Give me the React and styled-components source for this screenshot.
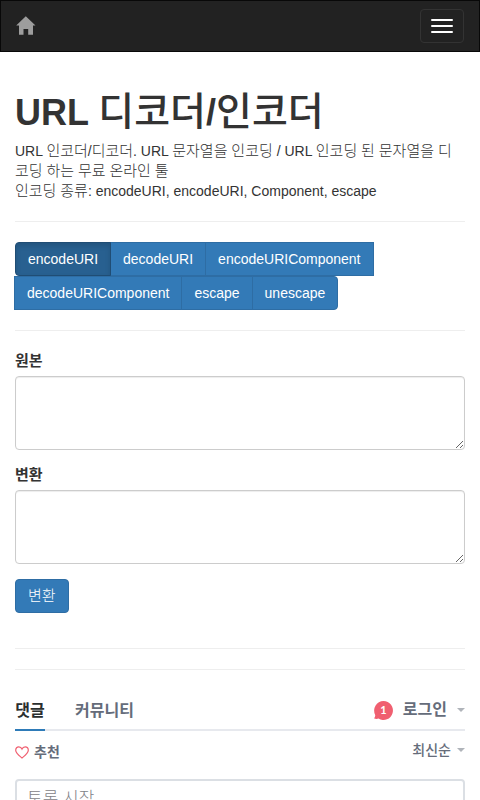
import React, { useState } from "react";
import styled, { createGlobalStyle } from "styled-components";

const GlobalStyle = createGlobalStyle`
  *, *::before, *::after { box-sizing: border-box; }
  body {
    margin: 0;
    background: #fff;
    color: #333;
    font-family: "Liberation Sans", "Noto Sans CJK KR", sans-serif;
    font-size: 14px;
    line-height: 20px;
  }
  button, textarea, input, select { font-family: inherit; }
`;

const Navbar = styled.nav`
  display: flex;
  align-items: center;
  justify-content: space-between;
  height: 52px;
  padding: 0 15px;
  background: #222;
  border: 1px solid #080808;
`;

const HomeLink = styled.a`
  display: flex;
  color: #9d9d9d;
`;

const Toggle = styled.button`
  display: flex;
  flex-direction: column;
  gap: 4px;
  padding: 9px 10px;
  height: 34px;
  justify-content: center;
  background: transparent;
  border: 1px solid #333;
  border-radius: 4px;
`;

const ToggleBar = styled.span`
  width: 22px;
  height: 2px;
  border-radius: 1px;
  background: #fff;
`;

const Page = styled.main`
  padding: 40px 15px 0;
`;

const Title = styled.h1`
  margin: 0 0 9px;
  font-size: 36px;
  line-height: 39px;
  font-weight: 700;
`;

const Hangul = styled.span`
  font-size: ${(p) => (p.$large ? 39 : 15)}px;
  font-weight: ${(p) => (p.$large ? 500 : 300)};
  line-height: 1;
`;

const Slash = styled.span`
  font-weight: 700;
`;

const Intro = styled.p`
  margin: 0;
`;

const Rule = styled.hr`
  margin: 20px 0;
  border: 0;
  border-top: 1px solid #eee;
`;

const Modes = styled.div`
  display: flex;
  flex-wrap: wrap;
`;

const Button = styled.button`
  height: 34px;
  padding: 6px 12px;
  font-size: 14px;
  line-height: 20px;
  color: #fff;
  background: #337ab7;
  border: 1px solid #2e6da4;
  border-radius: 4px;
`;

const ModeButton = styled(Button)`
  margin-left: -1px;
  border-radius: 0;
  ${(p) => p.$active && `
    position: relative;
    background: #286090;
    border-color: #204d74;
    box-shadow: inset 0 3px 5px rgba(0, 0, 0, 0.125);
  `}
  &:first-child { margin-left: 0; border-radius: 4px 0 0 4px; }
  &:last-child { border-radius: 0 4px 4px 0; }
`;

const SubmitButton = styled(Button)`
  font-size: 15px;
  font-weight: 300;
`;

const Field = styled.div`
  margin-bottom: 15px;
`;

const Label = styled.label`
  display: block;
  margin-bottom: 5px;
  font-size: 15px;
  font-weight: 700;
`;

const TextArea = styled.textarea`
  display: block;
  width: 100%;
  height: 74px;
  padding: 6px 12px;
  font-size: 14px;
  line-height: 20px;
  color: #555;
  border: 1px solid #ccc;
  border-radius: 4px;
  box-shadow: inset 0 1px 1px rgba(0, 0, 0, 0.075);
`;

const Footer = styled.div`
  padding-top: 15px;
`;

const Comments = styled.section`
  color: #656c7a;
  font-weight: 700;
`;

const TabBar = styled.div`
  display: flex;
  align-items: stretch;
  gap: 30px;
  height: 41px;
  border-bottom: 2px solid #e7e9ee;
`;

const Tab = styled.button`
  min-width: 30px;
  height: 41px;
  padding: 2px 0 0;
  border: 0;
  border-bottom: 2px solid ${(p) => (p.$active ? "#2e7bb8" : "transparent")};
  background: none;
  color: ${(p) => (p.$active ? "#2a2e2e" : "#656c7a")};
  font-size: 16px;
  font-weight: 700;
  line-height: 20px;
`;

const Account = styled.div`
  display: flex;
  align-items: center;
  gap: 10px;
  margin-left: auto;
  padding-top: 1px;
`;

const Badge = styled.span`
  position: relative;
  width: 19px;
  height: 19px;
  color: #fff;
  font: 700 11px/18px Lato, sans-serif;
  text-align: center;
`;

const Bubble = styled.svg`
  position: absolute;
  inset: 0;
  z-index: -1;
  overflow: visible;
`;

const MenuButton = styled.button`
  display: flex;
  align-items: center;
  gap: ${(p) => (p.$small ? 6 : 10)}px;
  padding: 0;
  border: 0;
  background: none;
  color: #656c7a;
  font-size: ${(p) => (p.$small ? 14 : 16)}px;
  font-weight: ${(p) => (p.$small ? 500 : 700)};
  line-height: 20px;
  &::after {
    content: "";
    border: 4px solid transparent;
    border-top-color: #b0b4ba;
    border-bottom-width: 0;
  }
`;

const ActionRow = styled.div`
  display: flex;
  align-items: flex-start;
  justify-content: space-between;
  height: 40px;
  padding-top: 9px;
`;

const Recommend = styled.button`
  display: flex;
  align-items: center;
  gap: 5px;
  padding: 2px 0 0;
  border: 0;
  background: none;
  color: #656c7a;
  font-size: 14px;
  font-weight: 700;
  line-height: 20px;
`;

const Discussion = styled.textarea`
  display: block;
  width: 100%;
  height: 72px;
  margin-top: 8px;
  padding: 8px 10px;
  border: 2px solid #dbdfe4;
  border-radius: 4px;
  font-size: 17px;
  font-weight: 300;
  line-height: 20px;
  resize: none;
  &::placeholder { color: #7f8287; }
`;

const Viewport = styled.div`
  position: relative;
  z-index: 0;
  height: 100vh;
  overflow: hidden;
`;

function MixedText({ children, large }) {
  return children
    .split(/([가-힣]+)/)
    .map((part, i) => (i % 2 ? <Hangul key={i} $large={large}>{part}</Hangul> : part));
}

const modes = [
  "encodeURI",
  "decodeURI",
  "encodeURIComponent",
  "decodeURIComponent",
  "escape",
  "unescape",
];

export default function App() {
  const [mode, setMode] = useState("encodeURI");
  return (
    <Viewport>
      <GlobalStyle />
      <Navbar>
        <HomeLink href="#" aria-label="Home">
          <svg width="20" height="20" viewBox="0 0 20 20" fill="currentColor">
            <path d="M9.800.3 19.500 9.500H17V18.800H12.200V13H7.500V18.800H3V9.500H.2Z" />
          </svg>
        </HomeLink>
        <Toggle aria-label="Toggle navigation">
          <ToggleBar />
          <ToggleBar />
          <ToggleBar />
        </Toggle>
      </Navbar>
      <Page>
        <Title>
          URL <Hangul $large>디코더</Hangul><Slash>/</Slash><Hangul $large>인코더</Hangul>
        </Title>
        <Intro>
          <MixedText>URL 인코더/디코더. URL 문자열을 인코딩 / URL 인코딩 된 문자열을 디</MixedText>
          <wbr />
          <MixedText>코딩 하는 무료 온라인 툴</MixedText>
          <br />
          <MixedText>인코딩 종류: encodeURI, encodeURI, Component, escape</MixedText>
        </Intro>
        <Rule />
        <Modes role="group">
          {modes.map((name) => (
            <ModeButton key={name} $active={name === mode} onClick={() => setMode(name)}>
              {name}
            </ModeButton>
          ))}
        </Modes>
        <Rule />
        <Field>
          <Label htmlFor="source">원본</Label>
          <TextArea id="source" />
        </Field>
        <Field>
          <Label htmlFor="result">변환</Label>
          <TextArea id="result" />
        </Field>
        <SubmitButton>변환</SubmitButton>
        <Footer>
          <Rule />
          <Rule />
        </Footer>
        <Comments>
          <TabBar>
            <Tab $active>댓글</Tab>
            <Tab>커뮤니티</Tab>
            <Account>
              <Badge>
                <Bubble width="19" height="19" viewBox="0 0 19 19" fill="#f05f70">
                  <path d="M9.500 0A9.500 9.500 0 1 1 4.500 17.600C3 18.100 1.200 18 0 17.300 1 16.300 1.300 15 1.200 13.900A9.500 9.500 0 0 1 9.500 0Z" />
                </Bubble>
                1
              </Badge>
              <MenuButton>로그인</MenuButton>
            </Account>
          </TabBar>
          <ActionRow>
            <Recommend>
              <svg width="14" height="13" viewBox="0 0 14 13" fill="none" stroke="#f05f70" strokeWidth="1.2">
                <path d="M7 12C4 9.5.7 7.200.7 4.200.7 2.200 2 .8 3.800.8 5.300.8 6.400 1.600 7 3 7.600 1.600 8.700.8 10.200.8 12 .8 13.300 2.200 13.300 4.200 13.300 7.200 10 9.500 7 12Z" />
              </svg>
              추천
            </Recommend>
            <MenuButton $small>최신순</MenuButton>
          </ActionRow>
          <Discussion aria-label="토론 시작" placeholder="토론 시작..." />
        </Comments>
      </Page>
    </Viewport>
  );
}
